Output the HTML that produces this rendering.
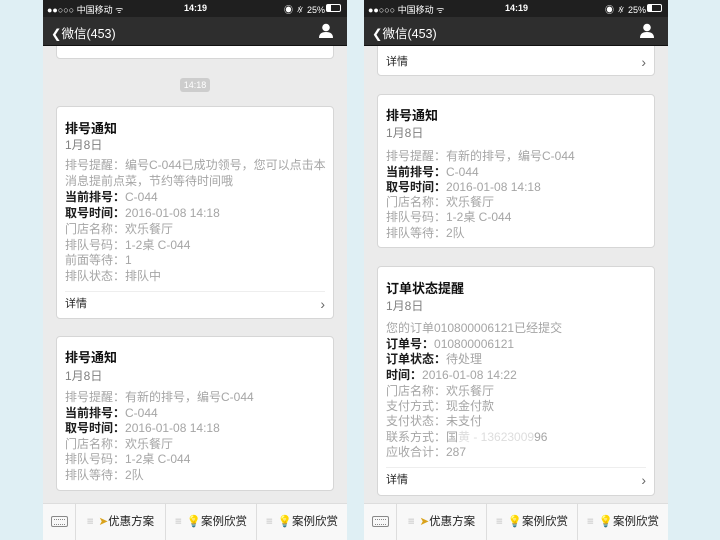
<!DOCTYPE html>
<html><head><meta charset="utf-8"><style>
*{margin:0;padding:0;box-sizing:border-box}
body{width:720px;height:540px;background:#dfeff4;position:relative;overflow:hidden;font-family:"Liberation Sans","Noto Sans CJK SC",sans-serif}
.ph{position:absolute;top:0;width:304px;height:540px;background:#ebebeb;overflow:hidden}
.sb{position:absolute;left:0;top:0;width:100%;height:17px;background:#1f1f1f;color:#fff;font-size:9px}
.nv{position:absolute;left:0;top:17px;width:100%;height:29px;background:#2e2e2e;color:#fff;font-size:12.5px;border-bottom:1px solid #111}
.card{position:absolute;left:13px;width:278px;background:#fff;border:1px solid #d6d6d6;border-radius:4px}
.t{position:absolute;left:8px;font-size:12px;line-height:16px;color:#a5a5a5;white-space:nowrap}
.t b{color:#1a1a1a}
.h{font-size:13px;font-weight:bold;color:#111}
.d{color:#808080}
.dv{position:absolute;left:8px;right:8px;height:1px;background:#eee}
.ar{position:absolute;right:8px;font-size:14px;line-height:14px;color:#666}
.bar{position:absolute;left:0;top:503px;width:100%;height:37px;background:#f8f8f8;border-top:1px solid #ddd}
.cell{position:absolute;top:0;height:37px;border-left:1px solid #ddd;font-size:11.5px;color:#222;line-height:36px;text-align:center}
.cell i{font-style:normal;color:#bbb;margin-right:5px}
.kb{position:absolute;left:8px;top:12px;width:17px;height:11px;border:1px solid #888;border-radius:2px}
.kb:after{content:"";position:absolute;left:2px;top:2px;width:11px;height:4px;border-top:1px dotted #888;border-bottom:1px dotted #888}
</style></head><body>

<!-- LEFT PHONE -->
<div class="ph" style="left:43px">
 <div class="card" style="top:30px;height:29px"></div>
 <div style="position:absolute;left:137px;top:78px;width:30px;height:14px;background:#cdcdcd;border-radius:3px;color:#fff;font-size:9px;line-height:14px;text-align:center">14:18</div>
 <div class="card" style="top:106px;height:213px">
  <div class="t h" style="top:14px">排号通知</div>
  <div class="t d" style="top:30px">1月8日</div>
  <div class="t" style="top:50px">排号提醒：编号C-044已成功领号，您可以点击本</div>
  <div class="t" style="top:66px">消息提前点菜，节约等待时间哦</div>
  <div class="t" style="top:82px"><b>当前排号：</b>C-044</div>
  <div class="t" style="top:98px"><b>取号时间：</b>2016-01-08 14:18</div>
  <div class="t" style="top:114px">门店名称：欢乐餐厅</div>
  <div class="t" style="top:130px">排队号码：1-2桌 C-044</div>
  <div class="t" style="top:145px">前面等待：1</div>
  <div class="t" style="top:161px">排队状态：排队中</div>
  <div class="dv" style="top:184px"></div>
  <div class="t" style="top:189px;color:#222;font-size:11px">详情</div>
  <div class="ar" style="top:190px">›</div>
 </div>
 <div class="card" style="top:336px;height:155px">
  <div class="t h" style="top:13px">排号通知</div>
  <div class="t d" style="top:31px">1月8日</div>
  <div class="t" style="top:52px">排号提醒：有新的排号，编号C-044</div>
  <div class="t" style="top:68px"><b>当前排号：</b>C-044</div>
  <div class="t" style="top:83px"><b>取号时间：</b>2016-01-08 14:18</div>
  <div class="t" style="top:99px">门店名称：欢乐餐厅</div>
  <div class="t" style="top:114px">排队号码：1-2桌 C-044</div>
  <div class="t" style="top:130px">排队等待：2队</div>
 </div>
 <div class="bar">
  <div class="kb"></div>
  <div class="cell" style="left:32px;width:90px"><i>≡</i><span style="color:#d9a21b">➤</span>优惠方案</div>
  <div class="cell" style="left:122px;width:91px"><i>≡</i><span style="color:#e8c24a">💡</span>案例欣赏</div>
  <div class="cell" style="left:213px;width:91px"><i>≡</i><span style="color:#e8c24a">💡</span>案例欣赏</div>
 </div>
 <div class="sb"><span style="position:absolute;left:4px;top:3px">●●○○○ 中国移动 ᯤ</span><span style="position:absolute;left:141px;top:3px;font-weight:bold">14:19</span><span style="position:absolute;right:22px;top:3px">◉ ∦ 25%</span><span style="position:absolute;right:6px;top:4px;width:15px;height:8px;border:1px solid #fff;border-radius:2px"><span style="display:block;width:4px;height:6px;background:#fff"></span></span></div>
 <div class="nv"><span style="position:absolute;left:8px;top:6px">❮微信(453)</span><svg style="position:absolute;right:14px;top:6px" width="14" height="15" viewBox="0 0 14 15"><circle cx="7" cy="4.5" r="3.8" fill="#fff"/><path d="M0 15 Q0 9 7 9 Q14 9 14 15Z" fill="#fff"/></svg></div>
</div>

<!-- RIGHT PHONE -->
<div class="ph" style="left:364px">
 <div class="card" style="top:30px;height:46px">
  <div class="t" style="top:23px;color:#222;font-size:11px">详情</div>
  <div class="ar" style="top:24px">›</div>
 </div>
 <div class="card" style="top:94px;height:154px">
  <div class="t h" style="top:13px">排号通知</div>
  <div class="t d" style="top:30px">1月8日</div>
  <div class="t" style="top:53px">排号提醒：有新的排号，编号C-044</div>
  <div class="t" style="top:69px"><b>当前排号：</b>C-044</div>
  <div class="t" style="top:84px"><b>取号时间：</b>2016-01-08 14:18</div>
  <div class="t" style="top:99px">门店名称：欢乐餐厅</div>
  <div class="t" style="top:114px">排队号码：1-2桌 C-044</div>
  <div class="t" style="top:130px">排队等待：2队</div>
 </div>
 <div class="card" style="top:266px;height:230px">
  <div class="t h" style="top:14px">订单状态提醒</div>
  <div class="t d" style="top:31px">1月8日</div>
  <div class="t" style="top:53px">您的订单010800006121已经提交</div>
  <div class="t" style="top:69px"><b>订单号：</b>010800006121</div>
  <div class="t" style="top:84px"><b>订单状态：</b>待处理</div>
  <div class="t" style="top:100px"><b>时间：</b>2016-01-08 14:22</div>
  <div class="t" style="top:116px">门店名称：欢乐餐厅</div>
  <div class="t" style="top:131px">支付方式：现金付款</div>
  <div class="t" style="top:146px">支付状态：未支付</div>
  <div class="t" style="top:162px">联系方式：国<span style="color:#ddd">黄 - 13623009</span>96</div>
  <div class="t" style="top:177px">应收合计：287</div>
  <div class="dv" style="top:200px"></div>
  <div class="t" style="top:205px;color:#222;font-size:11px">详情</div>
  <div class="ar" style="top:206px">›</div>
 </div>
 <div class="bar">
  <div class="kb"></div>
  <div class="cell" style="left:32px;width:90px"><i>≡</i><span style="color:#d9a21b">➤</span>优惠方案</div>
  <div class="cell" style="left:122px;width:91px"><i>≡</i><span style="color:#e8c24a">💡</span>案例欣赏</div>
  <div class="cell" style="left:213px;width:91px"><i>≡</i><span style="color:#e8c24a">💡</span>案例欣赏</div>
 </div>
 <div class="sb"><span style="position:absolute;left:4px;top:3px">●●○○○ 中国移动 ᯤ</span><span style="position:absolute;left:141px;top:3px;font-weight:bold">14:19</span><span style="position:absolute;right:22px;top:3px">◉ ∦ 25%</span><span style="position:absolute;right:6px;top:4px;width:15px;height:8px;border:1px solid #fff;border-radius:2px"><span style="display:block;width:4px;height:6px;background:#fff"></span></span></div>
 <div class="nv"><span style="position:absolute;left:8px;top:6px">❮微信(453)</span><svg style="position:absolute;right:14px;top:6px" width="14" height="15" viewBox="0 0 14 15"><circle cx="7" cy="4.5" r="3.8" fill="#fff"/><path d="M0 15 Q0 9 7 9 Q14 9 14 15Z" fill="#fff"/></svg></div>
</div>
</body></html>
